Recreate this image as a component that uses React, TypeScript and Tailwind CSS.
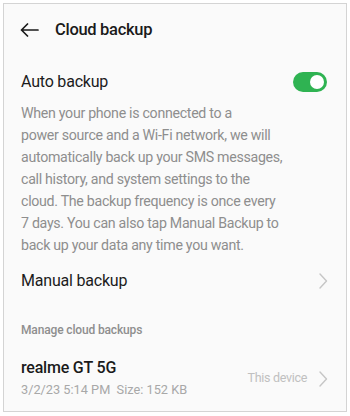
import React from "react";

const Chevron = () => (
  <svg width="10" height="18" viewBox="0 0 10 18" fill="none" className="shrink-0">
    <path d="M2 2 L8.5 9 L2 16" stroke="#c6c6c6" strokeWidth="1.4" strokeLinecap="round" strokeLinejoin="round" />
  </svg>
);

export default function App() {
  return (
    <div className="w-[350px] h-[416px] bg-white pt-[3px] pl-[3px] pr-[3px] pb-[4px]" style={{ fontFamily: "Roboto, 'Noto Sans', sans-serif" }}>
      <div className="h-full border border-[#d4d4d4] bg-[#fafafa] flex flex-col">
        <div className="h-[52px] flex items-center pl-[16px]">
          <svg width="19" height="14" viewBox="0 0 19 14" fill="none">
            <path d="M18 7 H1.5 M7.5 1 L1.5 7 L7.5 13" stroke="#1a1a1a" strokeWidth="1.7" strokeLinecap="round" strokeLinejoin="round" />
          </svg>
          <span className="ml-[16px] text-[16.5px] tracking-[-0.3px] font-medium text-[#1a1a1a] leading-none">Cloud backup</span>
        </div>
        <div className="mt-[14px] h-[24px] flex items-center justify-between pl-[17px] pr-[19px]">
          <span className="text-[16px] tracking-[-0.2px] text-[#1c1c1c]">Auto backup</span>
          <div className="w-[34px] h-[20px] rounded-full bg-[#2fb352] flex items-center justify-end pr-[3px]">
            <div className="w-[14px] h-[14px] rounded-full bg-white" />
          </div>
        </div>
        <p className="mt-[8px] pl-[17px] pr-[10px] text-[14.2px] tracking-[-0.3px] leading-[22px] text-[#8e8e8e]">
          When your phone is connected to a<br />
          power source and a Wi-Fi network, we will<br />
          automatically back up your SMS messages,<br />
          call history, and system settings to the<br />
          cloud. The backup frequency is once every<br />
          7 days. You can also tap Manual Backup to<br />
          back up your data any time you want.
        </p>
        <div className="mt-[13px] h-[24px] flex items-center justify-between pl-[17px] pr-[18px]">
          <span className="text-[16px] tracking-[-0.2px] text-[#1c1c1c]">Manual backup</span>
          <Chevron />
        </div>
        <div className="mt-[29px] h-[16px] flex items-center pl-[17px]">
          <span className="text-[12px] tracking-[-0.15px] font-medium text-[#8e8e8e]">Manage cloud backups</span>
        </div>
        <div className="mt-[19px] flex items-center justify-between pl-[17px] pr-[18px]">
          <div className="flex flex-col">
            <span className="text-[16px] tracking-[-0.2px] font-medium text-[#1a1a1a] leading-[22px]">realme GT 5G</span>
            <span className="text-[12.75px] text-[#a8a8a8] leading-[20px] mt-[1px]">3/2/23 5:14 PM&nbsp;&nbsp;Size: 152 KB</span>
          </div>
          <div className="flex items-center gap-[11px]">
            <span className="text-[12.5px] tracking-[-0.3px] text-[#c0c0c0]">This device</span>
            <Chevron />
          </div>
        </div>
      </div>
    </div>
  );
}
